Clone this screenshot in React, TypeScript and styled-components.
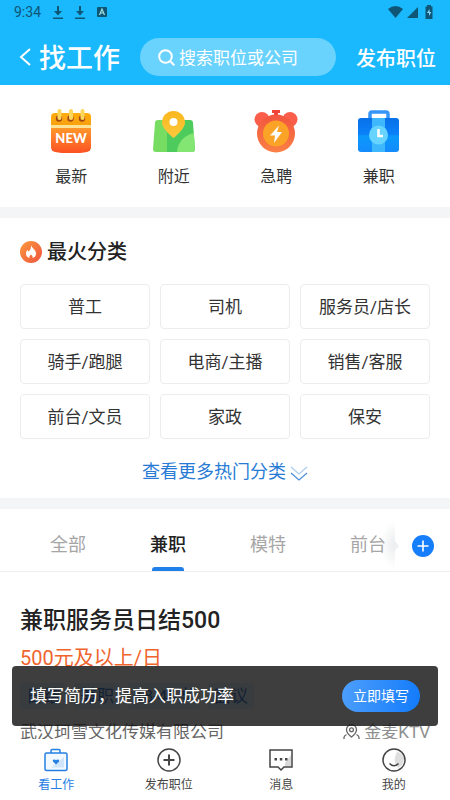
import React, { useState } from "react";
import styled, { createGlobalStyle } from "styled-components";

const GlobalStyle = createGlobalStyle`
  *, *::before, *::after { box-sizing: border-box; }
  body {
    margin: 0;
    background: #fff;
    color: #333;
    font-family: Roboto, "Noto Sans CJK SC", sans-serif;
  }
  button, input { font: inherit; color: inherit; }
  button { border: 0; padding: 0; background: none; cursor: pointer; }
  h1, h2, h3, p, ul { margin: 0; padding: 0; }
  ul { list-style: none; }
  a { color: inherit; text-decoration: none; }
  svg { display: block; flex: none; }
`;

const Screen = styled.div`
  height: 100vh;
  display: flex;
  flex-direction: column;
  background: #fff;
`;

const Header = styled.header`
  background: #1ab8fc;
  color: #fff;
  padding-bottom: 9px;
`;

const StatusBar = styled.div`
  display: flex;
  align-items: center;
  gap: 12px;
  height: 24px;
  padding: 0 14px;
  color: #0f5575;
  font-size: 14px;
  line-height: 24px;
`;

const StatusRight = styled.div`
  display: flex;
  align-items: center;
  gap: 4px;
  margin-left: auto;
`;

const TitleBar = styled.div`
  display: flex;
  align-items: center;
  height: 38px;
  margin-top: 14px;
  padding: 0 14px 0 18px;
`;

const Title = styled.h1`
  margin-left: 7px;
  padding-top: 4px;
  font-size: 27px;
  font-weight: 500;
  line-height: 38px;
`;

const SearchBox = styled.label`
  display: flex;
  flex: 1;
  align-items: center;
  gap: 4px;
  min-width: 0;
  height: 38px;
  margin: 0 20px;
  padding: 0 12px 0 18px;
  border-radius: 19px;
  background: #69d2fd;

  input {
    flex: 1;
    min-width: 0;
    padding: 2px 0 0;
    border: 0;
    outline: 0;
    background: none;
    font-size: 17px;
    line-height: 24px;
  }
  input::placeholder { color: #fff; opacity: 1; }
`;

const PublishLink = styled.button`
  padding-top: 4px;
  font-size: 20px;
  font-weight: 500;
  line-height: 38px;
`;

const Body = styled.div`
  position: relative;
  display: flex;
  flex: 1;
  flex-direction: column;
  min-height: 0;
`;

const Content = styled.main`
  flex: 1;
  min-height: 0;
  overflow-y: auto;
  scrollbar-width: none;
`;

const Shortcuts = styled.nav`
  display: grid;
  grid-template-columns: repeat(4, 1fr);
  padding: 24px 20px 18px;
`;

const Shortcut = styled.a`
  display: flex;
  flex-direction: column;
  align-items: center;
  gap: 12px;
  font-size: 16px;
  line-height: 24px;
`;

const Hot = styled.section`
  padding: 21px 20px 14px;
  border-top: 11px solid #f4f5f7;
  border-bottom: 11px solid #f4f5f7;
`;

const HotTitle = styled.h2`
  display: flex;
  align-items: center;
  gap: 5px;
  color: #222;
  font-size: 20px;
  font-weight: 500;
  line-height: 26px;
`;

const ChipGrid = styled.div`
  display: grid;
  grid-template-columns: repeat(3, 1fr);
  gap: 10px;
  margin: 19px 0 21px;
`;

const Chip = styled.button`
  height: 45px;
  border: 1px solid #ececec;
  border-radius: 4px;
  background: #fff;
  font-size: 17px;
  line-height: 24px;
  white-space: nowrap;
`;

const MoreButton = styled.button`
  display: flex;
  align-items: center;
  gap: 4px;
  margin: 0 auto;
  color: #287bd5;
  font-size: 18px;
  line-height: 24px;
`;

const TabBar = styled.div`
  display: flex;
  height: 63px;
  border-bottom: 1px solid #efeff1;
`;

const TabList = styled.div`
  display: flex;
  flex: 1;
  min-width: 0;
  padding-left: 18px;
  overflow: hidden;
`;

const Tab = styled.button<{ $active: boolean }>`
  display: flex;
  flex: 0 0 100px;
  flex-direction: column;
  align-items: center;
  justify-content: space-between;
  padding-top: 23px;
  color: ${(p) => (p.$active ? "#222" : "#a6a6a6")};
  font-size: 18px;
  font-weight: ${(p) => (p.$active ? 500 : 400)};
  line-height: 26px;

  &::after {
    content: "";
    width: 32px;
    height: 4px;
    border-radius: 3px 3px 0 0;
    background: ${(p) => (p.$active ? "#2080ea" : "transparent")};
  }
`;

const TabEnd = styled.div`
  position: relative;
  display: flex;
  flex: 0 0 55px;
  align-items: center;
  justify-content: center;
  padding-top: 12px;
  background: #fff;

  &::before {
    content: "";
    position: absolute;
    top: 12px;
    bottom: 2px;
    right: 100%;
    width: 14px;
    background: radial-gradient(ellipse at right, rgba(110, 120, 130, 0.14), rgba(255, 255, 255, 0) 72%);
  }
`;

const AddButton = styled.button`
  width: 22px;
  height: 22px;
`;

const TabArrow = styled.svg`
  position: absolute;
  left: 0;
  top: 32px;
`;

const Job = styled.article`
  padding: 31px 20px;
`;

const JobTitle = styled.h3`
  color: #222;
  font-size: 23px;
  font-weight: 500;
  line-height: 36px;
`;

const Salary = styled.p`
  margin-top: 4px;
  color: #f0642d;
  font-size: 20px;
  line-height: 30px;
`;

const Tags = styled.ul`
  display: flex;
  gap: 8px;
  margin-top: 10px;
`;

const Tag = styled.li`
  padding: 0 6px;
  border-radius: 3px;
  background: #e2f0ff;
  color: #0f62d0;
  font-size: 17px;
  line-height: 26px;
`;

const CompanyRow = styled.div`
  display: flex;
  align-items: center;
  justify-content: space-between;
  margin-top: 10px;
  color: #666;
  font-size: 17px;
  line-height: 26px;
`;

const Place = styled.span`
  display: flex;
  align-items: center;
  gap: 4px;
  color: #8e8e8e;
`;

const Toast = styled.aside`
  position: absolute;
  left: 12px;
  right: 12px;
  bottom: 13px;
  display: flex;
  align-items: center;
  justify-content: space-between;
  height: 60px;
  padding: 0 18px;
  border-radius: 4px;
  background: rgba(20, 20, 20, 0.82);
  color: #fff;
  font-size: 17px;
  line-height: 24px;
`;

const ToastButton = styled.button`
  width: 78px;
  height: 32px;
  border-radius: 16px;
  background: linear-gradient(100deg, #4e9ffb, #127afb);
  font-size: 14px;
`;

const BottomNav = styled.nav`
  display: grid;
  grid-template-columns: repeat(4, 1fr);
  height: 61px;
  padding-top: 9px;
  background: #fff;
`;

const NavItem = styled.a<{ $active?: boolean }>`
  display: flex;
  flex-direction: column;
  align-items: center;
  gap: 3px;
  color: ${(p) => (p.$active ? "#2480e4" : "#444")};
  font-size: 12px;
  line-height: 20px;
`;

const DownloadIcon = () => (
  <svg width="10" height="13" viewBox="0 0 10 13" fill="currentColor">
    <path d="M4 0h2v5h3L5 9.500 1 5h3zM0 11.500h10V13H0z" />
  </svg>
);

const NewIcon = () => (
  <svg width="44" height="44" viewBox="0 0 44 44">
    <defs>
      <linearGradient id="new-body" x1="0" y1="0" x2="0" y2="1">
        <stop offset="0" stopColor="#ff9a2c" />
        <stop offset="1" stopColor="#fb5023" />
      </linearGradient>
      <linearGradient id="new-top" x1="0" y1="0" x2="0" y2="1">
        <stop offset="0" stopColor="#ffac0c" />
        <stop offset="1" stopColor="#f8a010" />
      </linearGradient>
    </defs>
    <path d="M2 18h40v20q0 4-4 5-16 3-32 0-4-1-4-5z" fill="url(#new-body)" />
    <path d="M2 8q0-4 4-4h32q4 0 4 4v9H2z" fill="url(#new-top)" />
    <path d="M2 16h40v3H2z" fill="#ffe394" />
    {[10, 21.5, 33].map((x) => (
      <g key={x}>
        <circle cx={x} cy="9.500" r="3.200" fill="#a34a12" />
        <rect x={x - 1.5} y="0" width="4" height="11" rx="2" fill="#ffd65c" />
      </g>
    ))}
    <text x="22" y="33.500" textAnchor="middle" fill="#fff" fontFamily="Lato, sans-serif" fontSize="13" fontWeight="900">NEW</text>
  </svg>
);

const MapIcon = () => (
  <svg width="44" height="44" viewBox="0 0 44 44">
    <defs>
      <linearGradient id="pin" x1="0" y1="0" x2="0" y2="1">
        <stop offset="0" stopColor="#f8b71e" />
        <stop offset="1" stopColor="#ffc93d" />
      </linearGradient>
      <clipPath id="map-sheet"><path d="M6 11h32q3 0 3 3l2 26q0 3-3 3H4q-3 0-3-3l2-26q0-3 3-3z" /></clipPath>
    </defs>
    <g clipPath="url(#map-sheet)">
      <path d="M0 10h15v34H0z" fill="#77dc62" />
      <path d="M15 10h29v34H15z" fill="#4ecb5d" />
      <path d="M44 24a20 20 0 0 0-19 20h19z" fill="#83e572" />
    </g>
    <path d="M21.500 29S10 20 10 13.500a11.500 11.500 0 0 1 23 0C33 20 21.500 29 21.500 29z" fill="url(#pin)" />
    <circle cx="21.500" cy="13" r="4" fill="#fff" />
  </svg>
);

const AlarmIcon = () => (
  <svg width="44" height="44" viewBox="0 0 44 44">
    <defs>
      <linearGradient id="clock" x1="0" y1="0" x2="0" y2="1">
        <stop offset="0" stopColor="#f2553f" />
        <stop offset="1" stopColor="#fb8045" />
      </linearGradient>
    </defs>
    <circle cx="8" cy="10.500" r="7.500" fill="#fb5e4a" />
    <circle cx="36" cy="10.500" r="7.500" fill="#fb5e4a" />
    <path d="M20 3h4v4h-4zM18 1h8v3h-8z" fill="#f0443a" />
    <circle cx="22" cy="24.500" r="19" fill="url(#clock)" />
    <circle cx="22" cy="24.500" r="13" fill="#fba326" />
    <path d="M25 16.500l-9 10h5l-1 7.500 8-11h-5z" fill="#fff" />
  </svg>
);

const CaseIcon = () => (
  <svg width="44" height="44" viewBox="0 0 44 44">
    <defs>
      <linearGradient id="case" x1="0" y1="0" x2="0" y2="1">
        <stop offset="0" stopColor="#0870e8" />
        <stop offset=".5" stopColor="#0b82fa" />
        <stop offset=".52" stopColor="#0a99fb" />
        <stop offset="1" stopColor="#148bfc" />
      </linearGradient>
    </defs>
    <path d="M13 10V5q0-2 2-2h14q2 0 2 2v5" fill="none" stroke="#3596f8" strokeWidth="3.500" />
    <rect x="1" y="9" width="41" height="34" rx="3" fill="url(#case)" />
    <path d="M15 9h13v34H15z" fill="#3eb7fc" />
    <circle cx="21.500" cy="26" r="9.500" fill="#66d4ff" />
    <path d="M21.500 20v7H26" fill="none" stroke="#fff" strokeWidth="2.500" />
  </svg>
);

const FireIcon = () => (
  <svg width="22" height="22" viewBox="0 0 22 22">
    <defs>
      <linearGradient id="fire" x1="0" y1="0" x2="1" y2="1">
        <stop offset="0" stopColor="#fb993c" />
        <stop offset="1" stopColor="#ef5340" />
      </linearGradient>
    </defs>
    <circle cx="11" cy="11" r="11" fill="url(#fire)" />
    <path d="M11 4c.5 3 5 4.500 5 8.500 0 2.500-1.500 4-3.500 4.500.5-1.800-.5-2.500-1.500-3.500-1 1-2 1.700-1.500 3.500C7.500 16.500 6 15 6 12.500c0-1.500.6-2.600 1.500-3.500l1 1.500C10.500 9 11.200 7 11 4z" fill="#fff" />
  </svg>
);

const WorkIcon = () => (
  <svg width="24" height="24" viewBox="0 0 24 24" fill="none" stroke="#2480e4" strokeWidth="1.500">
    <path d="M7 5V2.500q0-1 1-1h7q1 0 1 1V5" />
    <rect x="1" y="5" width="22" height="17.500" rx="1.500" fill="#f2f8ff" />
    <path d="M20 9v10.500H7z" fill="#cfe5fc" stroke="none" />
    <path d="M12 16.500l-3-3q-.7-1.500.8-2 1.400-.2 2.200.8.800-1 2.200-.8 1.500.5.8 2z" fill="#2480e4" stroke="none" />
  </svg>
);

const PostIcon = () => (
  <svg width="24" height="24" viewBox="0 0 24 24" fill="none" stroke="#444">
    <circle cx="12" cy="12" r="11" strokeWidth="1.500" />
    <path d="M12 6.500v11M6.500 12h11" strokeWidth="2" />
  </svg>
);

const MessageIcon = () => (
  <svg width="24" height="24" viewBox="0 0 24 24">
    <path d="M16 15l6-8v11h-6z" fill="#d9d9d9" />
    <path d="M1 2h22v17h-8l-3 3-3-3H1z" fill="none" stroke="#444" strokeWidth="1.500" />
    <path d="M5.500 10h2.500v2.500H5.500zM10.800 10h2.500v2.500h-2.500zM16 10h2.500v2.500H16z" fill="#444" />
  </svg>
);

const MineIcon = () => (
  <svg width="24" height="24" viewBox="0 0 24 24">
    <path d="M15 4q4 0 7 6 0 7-6 10-6-7-1-16z" fill="#dedede" />
    <circle cx="12" cy="12" r="11" fill="none" stroke="#444" strokeWidth="1.500" />
    <path d="M7.500 15.500q4.500 4.500 9 0" fill="none" stroke="#444" strokeWidth="1.500" />
  </svg>
);

const shortcuts = [
  { label: "最新", Icon: NewIcon },
  { label: "附近", Icon: MapIcon },
  { label: "急聘", Icon: AlarmIcon },
  { label: "兼职", Icon: CaseIcon },
];
const chips = ["普工", "司机", "服务员/店长", "骑手/跑腿", "电商/主播", "销售/客服", "前台/文员", "家政", "保安"];
const tabs = ["全部", "兼职", "模特", "前台"];
const tags = ["日结", "兼职", "18-40岁", "面议"];
const navItems = [
  { label: "看工作", Icon: WorkIcon },
  { label: "发布职位", Icon: PostIcon },
  { label: "消息", Icon: MessageIcon },
  { label: "我的", Icon: MineIcon },
];

export default function App() {
  const [tab, setTab] = useState("兼职");
  return (
    <Screen>
      <GlobalStyle />
      <Header>
        <StatusBar>
          <span>9:34</span>
          <DownloadIcon />
          <DownloadIcon />
          <svg width="10" height="10" viewBox="0 0 10 10">
            <rect width="10" height="10" rx="1" fill="#0f5575" />
            <path d="M2.500 8L5 2l2.500 6M3.500 6h3" fill="none" stroke="#9fe0df" strokeWidth="1.200" />
          </svg>
          <StatusRight>
            <svg width="15" height="12" viewBox="0 0 15 12" fill="currentColor"><path d="M0 3Q7.500-3 15 3L7.500 12z" /></svg>
            <svg width="11" height="11" viewBox="0 0 11 11" fill="currentColor"><path d="M11 0v11H0z" /></svg>
            <svg width="14" height="14" viewBox="0 0 14 14">
              <path d="M5 1.500V0h4v1.500h1.500V14h-7V1.500z" fill="currentColor" />
              <path d="M7.500 4L5 8h2v3l2.300-4H7.500z" fill="#8adcff" />
            </svg>
          </StatusRight>
        </StatusBar>
        <TitleBar>
          <button aria-label="返回">
            <svg width="14" height="20" viewBox="0 0 14 20" fill="none" stroke="#fff" strokeWidth="2"><path d="M12 2L3 10l9 8" /></svg>
          </button>
          <Title>找工作</Title>
          <SearchBox>
            <svg width="17" height="17" viewBox="0 0 17 17" fill="none" stroke="#fff" strokeWidth="2">
              <circle cx="7.500" cy="7.500" r="6.300" />
              <path d="M12 12l4.300 4.300" />
            </svg>
            <input type="text" placeholder="搜索职位或公司" aria-label="搜索职位或公司" />
          </SearchBox>
          <PublishLink>发布职位</PublishLink>
        </TitleBar>
      </Header>

      <Body>
        <Content>
          <Shortcuts>
            {shortcuts.map(({ label, Icon }) => (
              <Shortcut key={label} href="#"><Icon />{label}</Shortcut>
            ))}
          </Shortcuts>

          <Hot>
            <HotTitle><FireIcon />最火分类</HotTitle>
            <ChipGrid>
              {chips.map((c) => <Chip key={c}>{c}</Chip>)}
            </ChipGrid>
            <MoreButton>
              查看更多热门分类
              <svg width="18" height="18" viewBox="0 0 18 18" fill="none" strokeWidth="1.200">
                <path d="M1 4l8 7 8-7" stroke="#a9cdf0" />
                <path d="M1 10l8 7 8-7" stroke="#4a90d9" />
              </svg>
            </MoreButton>
          </Hot>

          <TabBar>
            <TabList role="tablist">
              {tabs.map((t) => (
                <Tab key={t} role="tab" aria-selected={t === tab} $active={t === tab} onClick={() => setTab(t)}>{t}</Tab>
              ))}
            </TabList>
            <TabEnd>
              <TabArrow width="5" height="10" viewBox="0 0 5 10"><path d="M0 0l4 5-4 5z" fill="#eef0f1" /></TabArrow>
              <AddButton aria-label="添加分类">
                <svg width="22" height="22" viewBox="0 0 22 22">
                  <circle cx="11" cy="11" r="11" fill="#177efb" />
                  <path d="M11 5.500v11M5.500 11h11" stroke="#fff" strokeWidth="1.600" />
                </svg>
              </AddButton>
            </TabEnd>
          </TabBar>

          <Job>
            <JobTitle>兼职服务员日结500</JobTitle>
            <Salary>500元及以上/日</Salary>
            <Tags>{tags.map((t) => <Tag key={t}>{t}</Tag>)}</Tags>
            <CompanyRow>
              <span>武汉珂雪文化传媒有限公司</span>
              <Place>
                <svg width="17" height="17" viewBox="0 0 17 17" fill="none" stroke="#666" strokeWidth="1.300">
                  <path d="M8.500 13S3.500 9 3.500 5.700a5 5 0 0 1 10 0C13.500 9 8.500 13 8.500 13z" />
                  <circle cx="8.500" cy="5.700" r="1.900" />
                  <path d="M3.500 10.500Q.5 12 1 14.500q.5 1.500 3.500 1.500M13.500 10.500q3 1.500 2.500 4-.5 1.500-3.500 1.500" />
                </svg>
                金麦KTV
              </Place>
            </CompanyRow>
          </Job>
        </Content>

        <Toast>
          <span>填写简历，提高入职成功率</span>
          <ToastButton>立即填写</ToastButton>
        </Toast>
      </Body>

      <BottomNav>
        {navItems.map(({ label, Icon }, i) => (
          <NavItem key={label} href="#" $active={i === 0}><Icon />{label}</NavItem>
        ))}
      </BottomNav>
    </Screen>
  );
}
